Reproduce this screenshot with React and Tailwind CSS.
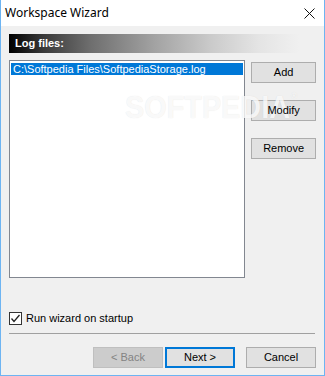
import React from 'react';

function Btn({ children, className = '', tone = 'normal' }) {
  const look =
    tone === 'disabled'
      ? 'bg-[#cccccc] border border-[#bfbfbf] text-[#838383]'
      : tone === 'default'
      ? 'bg-[#e1e1e1] border-2 border-[#0078d7] text-black'
      : 'bg-[#e1e1e1] border border-[#adadad] text-black';
  return (
    <div className={`relative h-[21px] flex items-center justify-center text-[11px] ${look} ${className}`}>
      <span className="relative z-30">{children}</span>
    </div>
  );
}

export default function App() {
  return (
    <div
      className="w-[325px] h-[376px] flex flex-col border-x border-b border-[#6db4f2] bg-[#f0f0f0] overflow-hidden"
      style={{ fontFamily: '"Liberation Sans", Arial, sans-serif' }}
    >
      {/* title bar */}
      <div className="h-[26px] shrink-0 bg-white flex items-center justify-between pl-[4px] pr-[9px]">
        <span className="text-[12px] text-black" style={{ fontFamily: '"Noto Sans", sans-serif' }}>
          Workspace Wizard
        </span>
        <svg width="11" height="11" viewBox="0 0 11 11">
          <path d="M0.5 0.5 L10.5 10.5 M10.5 0.5 L0.5 10.5" stroke="#111" strokeWidth="1" />
        </svg>
      </div>

      <div className="relative flex-1 flex flex-col px-[8px] pt-[8px]">
        {/* section header */}
        <div
          className="h-[19px] flex items-center pl-[6px] text-[11px] font-bold text-white w-[290px]"
          style={{
            background:
              'linear-gradient(to right, #000 0%, #3a3a3a 12%, #6e6e6e 28%, #a2a2a2 50%, #cbcbcb 70%, #e4e4e4 86%, #f0f0f0 100%)',
          }}
        >
          Log files:
        </div>

        <div className="flex gap-[6px] mt-[7px]">
          <div className="w-[237px] h-[218px] bg-white border border-[#828790] p-[1px] pt-[2px]">
            <div className="h-[12px] bg-[#0078d7] text-white text-[11px] leading-[12px] pl-[2px] whitespace-nowrap">
              C:\Softpedia Files\SoftpediaStorage.log
            </div>
          </div>
          <div className="w-[65px] flex flex-col gap-[16px] mt-[2px]">
            <Btn>Add</Btn>
            <Btn className="mt-[1px]">Modify</Btn>
            <Btn className="mt-[1px]">Remove</Btn>
          </div>
        </div>

        {/* watermark */}
        <div
          className="absolute left-[124px] top-[66px] z-20 text-[31px] leading-none font-bold text-white/80 pointer-events-none select-none origin-left scale-x-[0.93] whitespace-nowrap"
          style={{ textShadow: '0 0 1px rgba(0,0,0,0.12)' }}
        >
          SOFTPEDIA<span className="text-[9px] align-top ml-[1px]">®</span>
        </div>

        <div className="flex items-center gap-[4px] mt-[33px] h-[14px]">
          <div className="w-[13px] h-[13px] border border-[#333] bg-white flex items-center justify-center">
            <svg width="11" height="11" viewBox="0 0 11 11">
              <path d="M1.5 5.5 L4 8.5 L9.5 2" fill="none" stroke="#222" strokeWidth="1.3" />
            </svg>
          </div>
          <span className="text-[11px] text-black">Run wizard on startup</span>
        </div>

        <div className="h-[1px] bg-[#a0a0a0] mt-[8px] w-[306px]" />

        <div className="flex justify-end mt-[13px]">
          <Btn tone="disabled" className="w-[70px]">&lt; Back</Btn>
          <Btn tone="default" className="w-[70px] ml-[2px]">Next &gt;</Btn>
          <Btn className="w-[70px] ml-[11px]">Cancel</Btn>
        </div>
      </div>
    </div>
  );
}
